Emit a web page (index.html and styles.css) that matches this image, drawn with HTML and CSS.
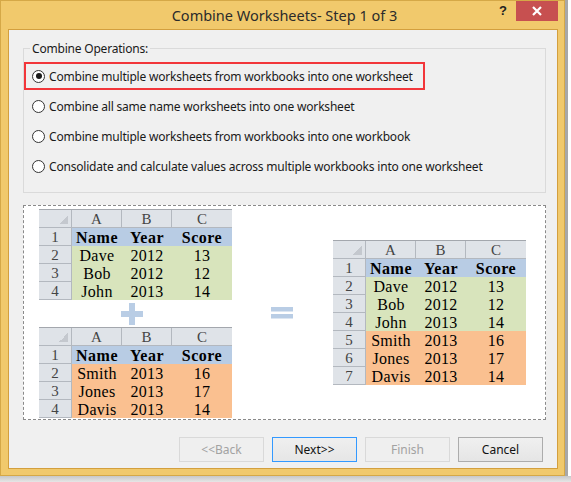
FILE: index.html
```html
<!DOCTYPE html>
<html>
<head>
<meta charset="utf-8">
<link rel="stylesheet" href="styles.css">
</head>
<body>
<div class="window">
  <div class="titlebar">
    <div class="spacer"></div>
    <div class="title">Combine Worksheets- Step 1 of 3</div>
    <div class="controls">
      <span class="help">?</span>
      <span class="close"><svg width="12" height="10" viewBox="0 0 12 10"><path d="M2 1 L10 9 M10 1 L2 9" stroke="#fff" stroke-width="2.2" fill="none"/></svg></span>
    </div>
  </div>
  <div class="client">
    <fieldset class="ops">
      <legend>Combine Operations:</legend>
      <label class="opt selected"><span class="radio checked"></span>Combine multiple worksheets from workbooks into one worksheet</label>
      <label class="opt"><span class="radio"></span>Combine all same name worksheets into one worksheet</label>
      <label class="opt"><span class="radio"></span>Combine multiple worksheets from workbooks into one workbook</label>
      <label class="opt"><span class="radio"></span>Consolidate and calculate values across multiple workbooks into one worksheet</label>
    </fieldset>
    <div class="preview">
      <div class="sources">
        <div class="sheet">
          <div class="hd corner"></div><div class="hd col">A</div><div class="hd col">B</div><div class="hd col last">C</div>
          <div class="hd row">1</div><div class="c h">Name</div><div class="c h">Year</div><div class="c h">Score</div>
          <div class="hd row">2</div><div class="c g">Dave</div><div class="c g">2012</div><div class="c g">13</div>
          <div class="hd row">3</div><div class="c g">Bob</div><div class="c g">2012</div><div class="c g">12</div>
          <div class="hd row">4</div><div class="c g">John</div><div class="c g">2013</div><div class="c g">14</div>
        </div>
        <svg class="plus" width="22" height="22" viewBox="0 0 22 22"><rect x="8" y="0" width="6" height="22" fill="#b9cde5"/><rect x="0" y="8" width="22" height="6" fill="#b9cde5"/></svg>
        <div class="sheet">
          <div class="hd corner"></div><div class="hd col">A</div><div class="hd col">B</div><div class="hd col last">C</div>
          <div class="hd row">1</div><div class="c h">Name</div><div class="c h">Year</div><div class="c h">Score</div>
          <div class="hd row">2</div><div class="c o">Smith</div><div class="c o">2013</div><div class="c o">16</div>
          <div class="hd row">3</div><div class="c o">Jones</div><div class="c o">2013</div><div class="c o">17</div>
          <div class="hd row">4</div><div class="c o">Davis</div><div class="c o">2013</div><div class="c o">14</div>
        </div>
      </div>
      <svg class="equals" width="22" height="12" viewBox="0 0 22 12"><rect x="0" y="0" width="22" height="4.5" fill="#b9cde5"/><rect x="0" y="7" width="22" height="4.5" fill="#b9cde5"/></svg>
      <div class="sheet">
        <div class="hd corner"></div><div class="hd col">A</div><div class="hd col">B</div><div class="hd col last">C</div>
        <div class="hd row">1</div><div class="c h">Name</div><div class="c h">Year</div><div class="c h">Score</div>
        <div class="hd row">2</div><div class="c g">Dave</div><div class="c g">2012</div><div class="c g">13</div>
        <div class="hd row">3</div><div class="c g">Bob</div><div class="c g">2012</div><div class="c g">12</div>
        <div class="hd row">4</div><div class="c g">John</div><div class="c g">2013</div><div class="c g">14</div>
        <div class="hd row">5</div><div class="c o">Smith</div><div class="c o">2013</div><div class="c o">16</div>
        <div class="hd row">6</div><div class="c o">Jones</div><div class="c o">2013</div><div class="c o">17</div>
        <div class="hd row">7</div><div class="c o">Davis</div><div class="c o">2013</div><div class="c o">14</div>
      </div>
    </div>
    <div class="buttons">
      <button class="btn disabled">&lt;&lt;Back</button>
      <button class="btn default">Next&gt;&gt;</button>
      <button class="btn disabled">Finish</button>
      <button class="btn">Cancel</button>
    </div>
  </div>
</div>
</body>
</html>
```

FILE: styles.css
```css
html, body {
  margin: 0;
  padding: 0;
}
body {
  width: 571px;
  height: 482px;
  background: linear-gradient(to bottom, #ffffff 0, #ffffff 476px, #c8c8c8 476px, #e6e6e6 482px);
  font-family: "Noto Sans", "Open Sans", sans-serif;
  overflow: hidden;
}
.window {
  box-sizing: border-box;
  width: 565px;
  height: 476px;
  background: #f1c96c;
  border: 1px solid #d5a847;
  padding: 0 6px 6px 7px;
  display: flex;
  flex-direction: column;
  box-shadow: 3px 0 0 #a8a8a8;
}
.titlebar {
  height: 28px;
  display: grid;
  grid-template-columns: 1fr auto 1fr;
  align-items: start;
  margin-right: -6px;
  margin-left: -7px;
}
.title {
  font-size: 14.5px;
  color: #2b2b2b;
  line-height: 29px;
  padding-left: 4px;
}
.controls {
  justify-self: end;
  display: flex;
  align-items: flex-start;
  margin-right: 6px;
}
.help {
  font-family: "Liberation Sans", sans-serif;
  font-weight: bold;
  font-size: 13px;
  color: #222;
  width: 20px;
  line-height: 20px;
  text-align: center;
  margin-right: 3px;
}
.close {
  width: 42px;
  height: 20px;
  background: #c75050;
  display: flex;
  align-items: center;
  justify-content: center;
}
.close svg { display: block; }
.client {
  flex: 1;
  background: #f0f0f0;
  border: 1px solid #d39f3e;
  display: flex;
  flex-direction: column;
  font-size: 12px;
  letter-spacing: -0.2px;
  color: #1a1a1a;
}
.ops {
  margin: 11px 11px 0 14px;
  padding: 5px 0 11px 0;
  border: 1px solid #dadada;
  min-inline-size: 0;
}
.ops legend {
  margin-left: 6px;
  padding: 0 2px;
  line-height: 15px;
  font-size: 12px;
}
.opt {
  display: flex;
  align-items: center;
  height: 30px;
  box-sizing: border-box;
  padding-left: 8px;
  white-space: nowrap;
}
.opt.selected {
  width: 401px;
  height: 28px;
  border: 2px solid #f2363a;
  padding-left: 6px;
  margin: 1px 0 1px 0;
}
.radio {
  box-sizing: border-box;
  width: 13px;
  height: 13px;
  border-radius: 50%;
  border: 1px solid #333;
  background: #fff;
  margin-right: 4px;
  flex: none;
  display: flex;
  align-items: center;
  justify-content: center;
}
.radio.checked::after {
  content: "";
  width: 6px;
  height: 6px;
  border-radius: 50%;
  background: #1a1a1a;
}
.preview {
  margin: 12px 11px 0 14px;
  height: 215px;
  box-sizing: border-box;
  border: 1px dashed #8a8a8a;
  background: #fff;
  display: flex;
  align-items: center;
  padding-left: 15px;
  letter-spacing: 0;
}
.sources {
  display: flex;
  flex-direction: column;
  margin-top: 1px;
}
.plus {
  display: block;
  margin: 3px 0 2px 82px;
}
.equals {
  display: block;
  margin: 0 40px 0 39px;
}
.sheet {
  display: grid;
  grid-template-columns: 33px 50px 50px 60px;
  grid-auto-rows: 18px;
  border-top: 1px solid #a3a7ad;
  font-family: "Liberation Serif", "DejaVu Serif", serif;
  font-size: 16px;
  color: #000;
}
.hd {
  background: #dfe3e8;
  box-sizing: border-box;
  border-bottom: 1px solid #b3b8bf;
  border-right: 1px solid #b3b8bf;
  color: #444;
  text-align: center;
  line-height: 18px;
  font-size: 15px;
}
.hd.col.last { border-right: none; }
.corner {
  background: #dfe3e8 linear-gradient(135deg, transparent 50%, #c4c8ce 50%) no-repeat right 3px bottom 3px / 9px 9px;
}
.c {
  text-align: center;
  line-height: 19px;
  white-space: nowrap;
  letter-spacing: 0.3px;
}
.c.h {
  background: #b8cce4;
  font-weight: bold;
  letter-spacing: 0.5px;
}
.c.g { background: #d8e4bc; }
.c.o { background: #fac090; }
.buttons {
  display: flex;
  justify-content: flex-end;
  gap: 8px;
  margin: 17px 14px 0 0;
}
.btn {
  box-sizing: border-box;
  width: 85px;
  height: 25px;
  font-family: "Noto Sans", "Open Sans", sans-serif;
  font-size: 12px;
  color: #111;
  border: 1px solid #acacac;
  background: linear-gradient(#f0f0f0, #e5e5e5);
  padding: 0;
}
.btn.default {
  border-color: #3399ff;
  background: linear-gradient(#efefef, #e6e6e6);
}
.btn.disabled {
  border-color: #d9d9d9;
  background: #efefef;
  color: #a2a2a2;
}
```
